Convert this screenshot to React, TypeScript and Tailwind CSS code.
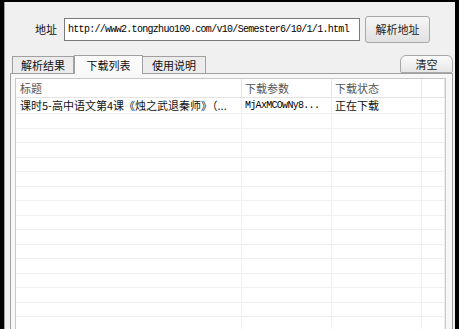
import React from "react";

const cjk = { fontFamily: '"Noto Sans CJK SC", "Liberation Sans", sans-serif' };
const mono = {
  fontFamily: '"Liberation Mono", "DejaVu Sans Mono", monospace',
  letterSpacing: "-0.7px",
};

const cols = ["w-[226px]", "w-[90px]", "w-[90px]", "flex-1"];

function Row({ cells, first }: { cells?: React.ReactNode[]; first?: boolean }) {
  return (
    <div className={`flex ${first ? "h-[16px]" : "h-[14.5px]"} border-b border-[#efefef]`}>
      {cols.map((c, i) => (
        <div
          key={i}
          className={`${c} shrink-0 border-r border-[#efefef] flex items-center overflow-hidden whitespace-nowrap ${i === 0 ? "pl-[4px]" : "pl-[3px]"}`}
        >
          {cells?.[i]}
        </div>
      ))}
    </div>
  );
}

export default function App() {
  const empties = Array.from({ length: 15 });
  return (
    <div
      className="w-[459px] h-[329px] overflow-hidden bg-[#f0f0f0] border-l-[4px] border-r-[4px] border-t-[2px] border-black text-[11px] text-[#111] leading-none"
      style={cjk}
    >
      <div className="h-full flex flex-col border-l border-[#a0a0a0]">
        {/* 地址栏 */}
        <div className="flex items-center pt-[14px] h-[41px]">
          <span className="ml-[30px] w-[28px]">地址</span>
          <div className="ml-[1px] w-[296px] h-[23px] bg-white border border-[#7a7a7a] flex items-center pl-[3px]">
            <span className="text-[10px] text-black" style={mono}>
              http://www2.tongzhuo100.com/v10/Semester6/10/1/1.html
            </span>
          </div>
          <button className="ml-[5px] w-[65px] h-[27px] rounded-[3px] border border-[#a8a8a8] bg-gradient-to-b from-[#f6f6f6] to-[#e1e1e1] text-[#222]">
            解析地址
          </button>
        </div>

        {/* 选项卡 */}
        <div className="flex items-end mt-[11px] h-[19px]">
          <div className="ml-[7px] w-[62px] h-[17px] border border-b-0 border-[#a0a0a0] bg-[#ececec] flex items-center justify-center">
            解析结果
          </div>
          <div className="w-[69px] h-[19px] border border-b-0 border-[#a0a0a0] bg-[#fafafa] flex items-center justify-center relative top-[1px]">
            下载列表
          </div>
          <div className="w-[63px] h-[17px] border border-b-0 border-l-0 border-[#a0a0a0] bg-[#ececec] flex items-center justify-center">
            使用说明
          </div>
          <div className="flex-1" />
          <button className="mr-[2px] w-[53px] h-[18px] rounded-t-[6px] rounded-b-[2px] border border-[#a8a8a8] bg-gradient-to-b from-[#fbfbfb] to-[#e6e6e6] text-[#222]">
            清空
          </button>
        </div>

        {/* 面板 */}
        <div className="flex-1 ml-[5px] mr-[2px] border border-b-0 border-[#a0a0a0] bg-[#f7f7f7] pt-[4px] pl-[4px] pr-[6px]">
          <div className="h-full bg-white border-l border-t border-r border-[#c8c8c8]">
            <div className="flex h-[19px] border-b border-[#e5e5e5] bg-white text-[#555]">
              {cols.map((c, i) => (
                <div
                  key={i}
                  className={`${c} shrink-0 border-r border-[#e5e5e5] flex items-center ${i === 0 ? "pl-[4px]" : "pl-[3px]"}`}
                >
                  {["标题", "下载参数", "下载状态", ""][i]}
                </div>
              ))}
            </div>
            <Row
              first
              cells={[
                <span className="text-[#111]">课时5-高中语文第4课《烛之武退秦师》（...</span>,
                <span className="text-[10px] text-black" style={mono}>MjAxMCOwNy8...</span>,
                <span className="text-[#111]">正在下载</span>,
              ]}
            />
            {empties.map((_, i) => (
              <Row key={i} />
            ))}
          </div>
        </div>
      </div>
    </div>
  );
}
